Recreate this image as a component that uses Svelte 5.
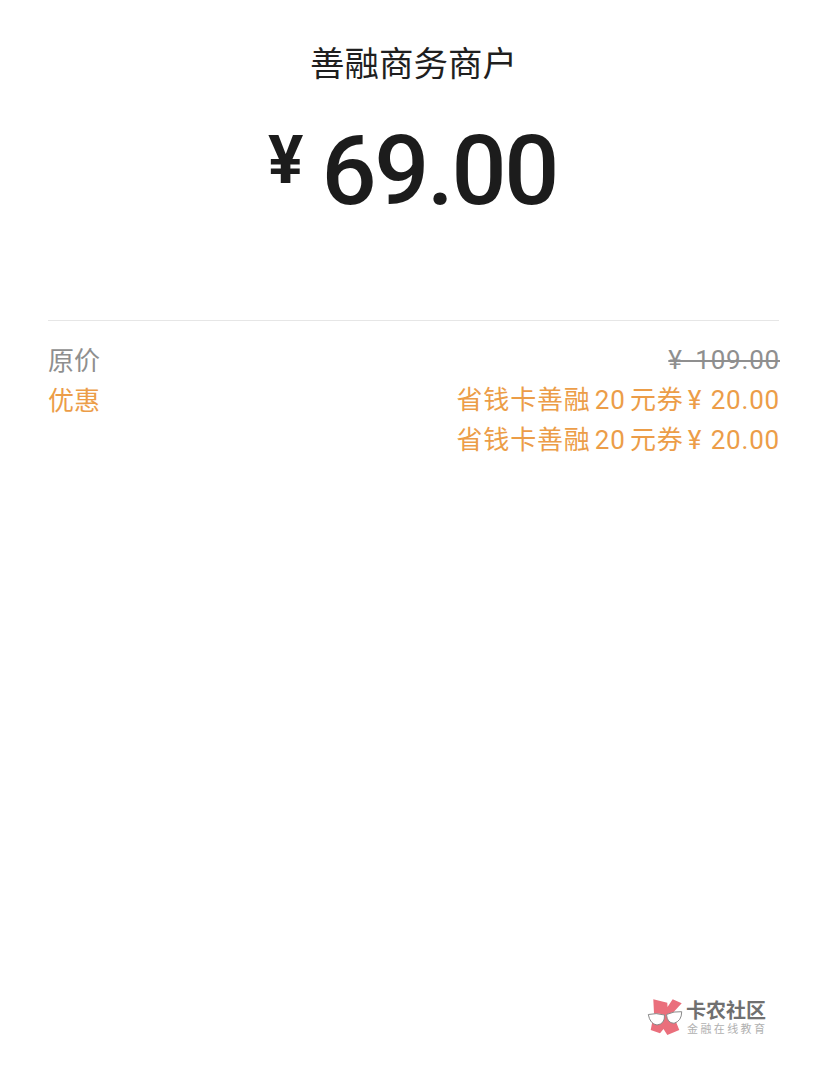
<script lang="ts">
  const rows = [
    { label: '原价', value: '¥  109.00', kind: 'original' },
    { label: '优惠', value: '省钱卡善融 20 元券 ¥  20.00', kind: 'discount' },
    { label: '', value: '省钱卡善融 20 元券 ¥  20.00', kind: 'discount' }
  ];
</script>

<main class="page">
  <h1 class="merchant">善融商务商户</h1>
  <div class="amount">
    <span class="currency">¥</span>
    <span class="number">69.00</span>
  </div>

  <section class="details">
    {#each rows as row}
      <div class="row {row.kind}">
        <span class="label">{row.label}</span>
        <span class="value">{row.value}</span>
      </div>
    {/each}
  </section>

  <!-- watermark -->
  <div class="watermark">
    <svg class="mark" viewBox="0 0 38 38" aria-hidden="true">
      <path fill="#ea6f7c" d="M6.3 1.3 L20.3 4.7 L20.5 9 L25.7 1.3 L34.7 5.3 L25.5 15.3 L32.3 32 L20.3 37 L16.5 31 L13 35.3 L3.7 32 L7 15.3 Z" />
      <path fill="#fff" stroke="#8a8a8a" stroke-width="1" d="M1.3 16.5 Q9 14.5 17.5 17 Q18 26 10 27 Q3 26 1.3 16.5 Z M19.5 16.5 Q27 13 34.7 13.7 Q34.7 23 27 25.3 Q20 25 19.5 16.5 Z" />
    </svg>
    <div class="brand">
      <div class="brand-name">卡农社区</div>
      <div class="brand-sub">金融在线教育</div>
    </div>
  </div>
</main>

<style>
  :global(body) {
    background: #fff;
  }

  .page {
    position: relative;
    height: 1086px;
    box-sizing: border-box;
    padding: 38px 49px 0 48px;
    font-family: "Noto Sans CJK SC", "Noto Sans", sans-serif;
    overflow: hidden;
  }

  .merchant {
    margin: 0;
    font-size: 34.5px;
    line-height: 46px;
    font-weight: 400;
    color: #1f1f1f;
    text-align: center;
  }

  .amount {
    display: flex;
    justify-content: center;
    align-items: flex-start;
    gap: 18px;
    height: 120px;
    margin-top: 29px;
    margin-left: -2px;
    color: #1c1c1c;
    font-family: Roboto, sans-serif;
  }

  .currency {
    font-size: 66px;
    line-height: 92px;
    margin-top: 2px;
    font-weight: 700;
  }

  .number {
    font-size: 97px;
    line-height: 116px;
    font-weight: 500;
    letter-spacing: -2.4px;
  }

  .details {
    margin-top: 87px;
    padding-top: 19px;
    border-top: 1px solid #e6e6e6;
  }

  .row {
    display: flex;
    justify-content: space-between;
    font-size: 26px;
    line-height: 40px;
  }

  .label {
    margin-top: -1px;
  }

  .value {
    font-family: Roboto, "Noto Sans CJK SC", sans-serif;
    letter-spacing: 0.8px;
    word-spacing: -3px;
    white-space: pre;
    margin-right: -1px;
  }

  .original {
    color: #8f8f8f;
  }

  .original .value {
    word-spacing: -1px;
    text-decoration: line-through;
    text-decoration-thickness: 2px;
  }

  .discount {
    color: #ec9d48;
  }

  .watermark {
    position: absolute;
    left: 647px;
    top: 998px;
    display: flex;
    gap: 1px;
  }

  .mark {
    width: 38px;
    height: 38px;
  }

  .brand {
    display: flex;
    flex-direction: column;
    gap: 1px;
  }

  .brand-name {
    font-size: 20px;
    line-height: 23px;
    font-weight: 700;
    color: #707070;
  }

  .brand-sub {
    font-size: 11px;
    line-height: 13px;
    letter-spacing: 2.4px;
    margin-left: 1px;
    color: #b0b0b0;
  }
</style>
